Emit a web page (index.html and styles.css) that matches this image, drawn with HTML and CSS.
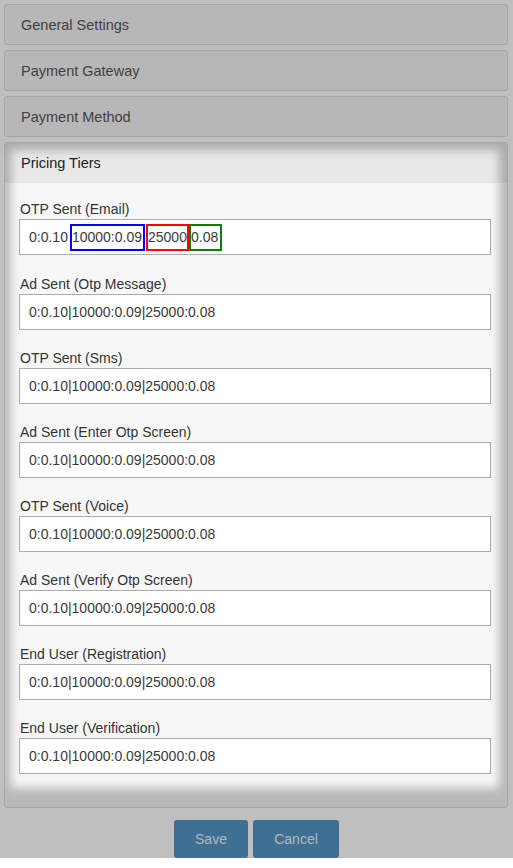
FILE: index.html
```html
<!DOCTYPE html>
<html>
<head>
<meta charset="utf-8">
<link rel="stylesheet" href="styles.css">
</head>
<body>
<div class="page">
  <div class="panel"><div class="panel-heading">General Settings</div></div>
  <div class="panel"><div class="panel-heading">Payment Gateway</div></div>
  <div class="panel"><div class="panel-heading">Payment Method</div></div>
  <div class="panel panel-active">
    <div class="panel-heading active-heading">Pricing Tiers</div>
    <div class="panel-body">
      <div class="form-group">
        <label class="field-label">OTP Sent (Email)</label>
        <div class="field">0:0.10<span class="mark mark-blue">10000:0.09</span><span class="mark mark-red">25000</span><span class="mark mark-green">0.08</span></div>
      </div>
      <div class="form-group">
        <label class="field-label">Ad Sent (Otp Message)</label>
        <div class="field">0:0.10|10000:0.09|25000:0.08</div>
      </div>
      <div class="form-group">
        <label class="field-label">OTP Sent (Sms)</label>
        <div class="field">0:0.10|10000:0.09|25000:0.08</div>
      </div>
      <div class="form-group">
        <label class="field-label">Ad Sent (Enter Otp Screen)</label>
        <div class="field">0:0.10|10000:0.09|25000:0.08</div>
      </div>
      <div class="form-group">
        <label class="field-label">OTP Sent (Voice)</label>
        <div class="field">0:0.10|10000:0.09|25000:0.08</div>
      </div>
      <div class="form-group">
        <label class="field-label">Ad Sent (Verify Otp Screen)</label>
        <div class="field">0:0.10|10000:0.09|25000:0.08</div>
      </div>
      <div class="form-group">
        <label class="field-label">End User (Registration)</label>
        <div class="field">0:0.10|10000:0.09|25000:0.08</div>
      </div>
      <div class="form-group">
        <label class="field-label">End User (Verification)</label>
        <div class="field">0:0.10|10000:0.09|25000:0.08</div>
      </div>
    </div>
    <div class="spotlight"></div>
  </div>
  <div class="actions">
    <button class="btn btn-save">Save</button>
    <button class="btn btn-cancel">Cancel</button>
  </div>
</div>
</body>
</html>
```

FILE: styles.css
```css
html, body {
  margin: 0;
  padding: 0;
  background: #ffffff;
  font-family: "Liberation Sans", Arial, sans-serif;
  color: #333;
  overflow: hidden;
}

.page {
  padding: 4px 5px 0 4px;
  display: flex;
  flex-direction: column;
  gap: 5px;
}

.panel {
  border: 1px solid #dcdcdc;
  border-radius: 3px;
  background: #f7f7f7;
}

.panel-heading {
  height: 39px;
  padding: 0 16px;
  box-sizing: border-box;
  line-height: 40px;
  font-size: 14.5px;
  color: #555;
  background: #f5f5f5;
  border-radius: 3px;
}

.panel-active {
  position: relative;
}

.active-heading {
  height: 40px;
  line-height: 40px;
  background: #e8e8e8;
  color: #222;
  border-radius: 3px 3px 0 0;
}

.panel-body {
  padding: 16.4px 16px 32.6px 14px;
  display: flex;
  flex-direction: column;
  gap: 18.14px;
}

.form-group {
  display: flex;
  flex-direction: column;
}

.field-label {
  font-size: 14px;
  line-height: 20px;
  height: 20px;
  color: #333;
  padding-left: 1px;
}

.field {
  height: 36px;
  box-sizing: border-box;
  border: 1px solid #ababab;
  background: #fff;
  padding: 0 9px;
  font-size: 14px;
  color: #3a3a3a;
  display: flex;
  align-items: center;
  white-space: pre;
}

.mark {
  display: inline-block;
  height: 27px;
  box-sizing: border-box;
  line-height: 23px;
  border: 2px solid;
}

.mark-blue {
  border-color: #0000ff;
  margin-left: 2px;
  padding: 0 1px 0 0;
}

.mark-red {
  border-color: #ff0000;
  margin-left: 1px;
}

.mark-green {
  border-color: #0a7d0a;
  padding-right: 2px;
}

.spotlight {
  position: absolute;
  top: 7px;
  left: 6px;
  right: 8px;
  bottom: 19px;
  border-radius: 4px;
  box-shadow: 0 0 0 3000px rgba(0, 0, 0, 0.25);
  filter: blur(5px);
  pointer-events: none;
  z-index: 10;
}

.actions {
  display: flex;
  justify-content: center;
  gap: 5px;
  margin-top: 7px;
  padding-left: 1px;
}

.btn {
  height: 38px;
  border: none;
  border-radius: 3px;
  background: #5595c3;
  color: #eef3f8;
  font-family: "Liberation Sans", Arial, sans-serif;
  font-size: 14px;
  padding: 0;
}

.btn-save {
  width: 74px;
}

.btn-cancel {
  width: 86px;
}
```
